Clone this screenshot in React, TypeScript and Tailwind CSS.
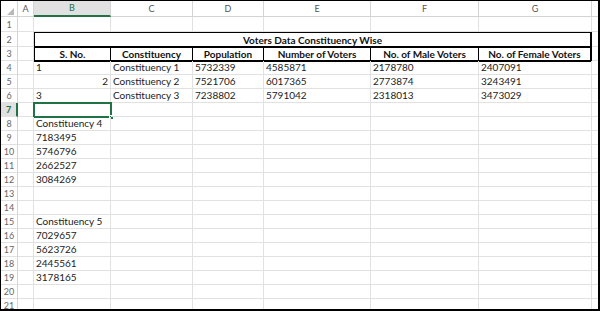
import React from "react";

const W = ["w-[77px]", "w-[82px]", "w-[71px]", "w-[107px]", "w-[108px]", "w-[113px]"];
const LETTERS = ["B", "C", "D", "E", "F", "G"];
const GRID = "border-[#e1e1e1]";

function RowNum({ n, sel, h }: { n: number; sel?: boolean; h: string }) {
  return (
    <div
      className={`${h} w-[17px] shrink-0 flex items-center justify-center text-[9px] leading-none border-b ${GRID} ${
        sel
          ? "bg-[#e1e1e1] text-[#217346] font-bold border-r-2 border-r-[#217346]"
          : "text-[#666] border-r border-r-[#d4d4d4]"
      }`}
    >
      {n}
    </div>
  );
}

function Cell({
  w,
  h,
  text,
  right,
  children,
}: {
  w: string;
  h: string;
  text?: string;
  right?: boolean;
  children?: React.ReactNode;
}) {
  return (
    <div
      className={`${w} ${h} shrink-0 relative border-r border-b ${GRID} px-[2px] flex items-end pb-[1px] text-[10px] leading-[11px] text-[#222] whitespace-nowrap ${
        right ? "justify-end" : "justify-start"
      }`}
    >
      {text}
      {children}
    </div>
  );
}

function Row({ n, cells, rightB, sel }: { n: number; cells?: string[]; rightB?: boolean; sel?: boolean }) {
  const h = n === 1 ? "h-[15px]" : "h-[14px]";
  return (
    <div className="flex">
      <RowNum n={n} h={h} sel={sel} />
      <Cell w="w-[16px]" h={h} />
      {W.map((w, i) => (
        <Cell key={i} w={w} h={h} text={cells?.[i] ?? ""} right={i === 0 && rightB}>
          {sel && i === 0 && (
            <div className="absolute -left-px -top-px w-[79px] h-[16px] border-2 border-[#217346]">
              <div className="absolute right-[-4px] bottom-[-4px] w-[5px] h-[5px] bg-[#217346] border border-white" />
            </div>
          )}
        </Cell>
      ))}
      <div className={`${h} w-[6px] shrink-0 border-b ${GRID}`} />
    </div>
  );
}

export default function App() {
  const headers = ["S. No.", "Constituency", "Population", "Number of Voters", "No. of Male Voters", "No. of Female Voters"];
  const hw = ["w-[76px]", "w-[82px]", "w-[71px]", "w-[107px]", "w-[108px]", "w-[111px]"];
  const rows: { n: number; cells?: string[]; rightB?: boolean; sel?: boolean }[] = [
    { n: 4, cells: ["1", "Constituency 1", "5732339", "4585871", "2178780", "2407091"] },
    { n: 5, cells: ["2", "Constituency 2", "7521706", "6017365", "2773874", "3243491"], rightB: true },
    { n: 6, cells: ["3", "Constituency 3", "7238802", "5791042", "2318013", "3473029"] },
    { n: 7, sel: true },
    { n: 8, cells: ["Constituency 4"] },
    { n: 9, cells: ["7183495"] },
    { n: 10, cells: ["5746796"] },
    { n: 11, cells: ["2662527"] },
    { n: 12, cells: ["3084269"] },
    { n: 13 },
    { n: 14 },
    { n: 15, cells: ["Constituency 5"] },
    { n: 16, cells: ["7029657"] },
    { n: 17, cells: ["5623726"] },
    { n: 18, cells: ["2445561"] },
    { n: 19, cells: ["3178165"] },
    { n: 20 },
    { n: 21 },
  ];
  return (
    <div className="w-[600px] h-[311px] overflow-hidden bg-white border-black border-t border-l border-r-2 border-b-2 font-['Lato',sans-serif]">
      {/* column header row */}
      <div className="flex h-[16px]">
        <div className="w-[17px] h-[16px] shrink-0 border-r border-b border-[#d4d4d4] flex items-start">
          <svg width="16" height="15" viewBox="0 0 16 15">
            <polygon points="13,7 13,14 6,14" fill="#b9b9b9" />
          </svg>
        </div>
        <div className="w-[16px] h-[16px] shrink-0 border-r border-b border-[#d4d4d4] flex items-center justify-center text-[9px] text-[#555]">
          A
        </div>
        {W.map((w, i) =>
          i === 0 ? (
            <div
              key={i}
              className={`${w} h-[16px] shrink-0 bg-[#e1e1e1] border-r border-r-[#d4d4d4] border-b-2 border-b-[#217346] flex items-center justify-center text-[9px] text-[#217346]`}
            >
              {LETTERS[i]}
            </div>
          ) : (
            <div
              key={i}
              className={`${w} h-[16px] shrink-0 border-r border-b border-[#d4d4d4] flex items-center justify-center text-[9px] text-[#555]`}
            >
              {LETTERS[i]}
            </div>
          )
        )}
        <div className="w-[6px] h-[16px] shrink-0 border-b border-[#d4d4d4]" />
      </div>

      <Row n={1} />

      {/* rows 2-3 with the bordered title table */}
      <div className="flex h-[29px] items-start">
        <div className="flex flex-col shrink-0">
          <RowNum n={2} h="h-[15px]" />
          <RowNum n={3} h="h-[14px]" />
        </div>
        <div className="flex flex-col shrink-0">
          <Cell w="w-[16px]" h="h-[15px]" />
          <Cell w="w-[16px]" h="h-[14px]" />
        </div>
        <div className="w-[559px] h-[31px] -mt-px -ml-px shrink-0 border-2 border-black flex flex-col">
          <div className="h-[15px] border-b-2 border-black flex items-center justify-center text-[10px] font-bold text-[#111] leading-none">
            Voters Data Constituency Wise
          </div>
          <div className="flex h-[12px]">
            {headers.map((t, i) => (
              <div
                key={i}
                className={`${hw[i]} h-[12px] shrink-0 ${
                  i < 5 ? "border-r border-black" : ""
                } flex items-center justify-center text-[10px] font-bold text-[#111] leading-none whitespace-nowrap`}
              >
                {t}
              </div>
            ))}
          </div>
        </div>
        <div className="flex flex-col shrink-0">
          <div className={`w-[6px] h-[15px] border-b ${GRID}`} />
          <div className={`w-[6px] h-[14px] border-b ${GRID}`} />
        </div>
      </div>

      {rows.map((r) => (
        <Row key={r.n} n={r.n} cells={r.cells} rightB={r.rightB} sel={r.sel} />
      ))}
    </div>
  );
}
